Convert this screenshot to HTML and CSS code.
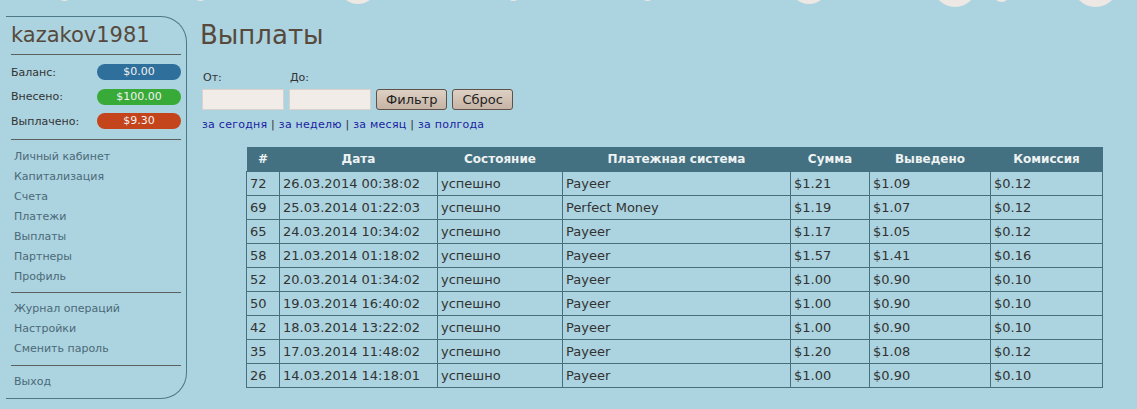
FILE: index.html
```html
<!DOCTYPE html>
<html lang="ru">
<head>
    <meta charset="UTF-8">
    <title>Выплаты</title>
    <link rel="stylesheet" href="styles.css">
</head>
<body>
    <div class="bubbles">
        <span class="bubble b1"></span>
        <span class="bubble b2"></span>
        <span class="bubble b3"></span>
        <span class="bubble b4"></span>
        <span class="bubble b5"></span>
        <span class="bubble b6"></span>
        <span class="bubble b7"></span>
        <span class="bubble b8"></span>
        <span class="bubble b9"></span>
    </div>

    <div class="page">
        <div class="sidebar">
            <h2 class="user-name">kazakov1981</h2>
            <div class="balance-list">
                <div class="balance-row">
                    <span>Баланс:</span>
                    <span class="pill pill-blue">$0.00</span>
                </div>
                <div class="balance-row">
                    <span>Внесено:</span>
                    <span class="pill pill-green">$100.00</span>
                </div>
                <div class="balance-row">
                    <span>Выплачено:</span>
                    <span class="pill pill-red">$9.30</span>
                </div>
            </div>
            <ul class="menu">
                <li><a href="#">Личный кабинет</a></li>
                <li><a href="#">Капитализация</a></li>
                <li><a href="#">Счета</a></li>
                <li><a href="#">Платежи</a></li>
                <li><a href="#">Выплаты</a></li>
                <li><a href="#">Партнеры</a></li>
                <li><a href="#">Профиль</a></li>
            </ul>
            <ul class="menu">
                <li><a href="#">Журнал операций</a></li>
                <li><a href="#">Настройки</a></li>
                <li><a href="#">Сменить пароль</a></li>
            </ul>
            <ul class="menu menu-last">
                <li><a href="#">Выход</a></li>
            </ul>
        </div>

        <div class="content">
            <h1 class="page-title">Выплаты</h1>

            <form class="filter">
                <div class="filter-labels">
                    <label for="dateFrom">От:</label>
                    <label for="dateTo">До:</label>
                </div>
                <div class="filter-inputs">
                    <input type="text" id="dateFrom">
                    <input type="text" id="dateTo">
                    <button type="button" class="btn">Фильтр</button>
                    <button type="button" class="btn">Сброс</button>
                </div>
                <div class="quick-links">
                    <a href="#">за сегодня</a> | <a href="#">за неделю</a> | <a href="#">за месяц</a> | <a href="#">за полгода</a>
                </div>
            </form>

            <table class="payouts">
                <thead>
                    <tr>
                        <th class="col-id">#</th>
                        <th class="col-date">Дата</th>
                        <th class="col-state">Состояние</th>
                        <th class="col-system">Платежная система</th>
                        <th class="col-sum">Сумма</th>
                        <th class="col-out">Выведено</th>
                        <th class="col-fee">Комиссия</th>
                    </tr>
                </thead>
                <tbody>
                    <tr><td>72</td><td>26.03.2014 00:38:02</td><td>успешно</td><td>Payeer</td><td>$1.21</td><td>$1.09</td><td>$0.12</td></tr>
                    <tr><td>69</td><td>25.03.2014 01:22:03</td><td>успешно</td><td>Perfect Money</td><td>$1.19</td><td>$1.07</td><td>$0.12</td></tr>
                    <tr><td>65</td><td>24.03.2014 10:34:02</td><td>успешно</td><td>Payeer</td><td>$1.17</td><td>$1.05</td><td>$0.12</td></tr>
                    <tr><td>58</td><td>21.03.2014 01:18:02</td><td>успешно</td><td>Payeer</td><td>$1.57</td><td>$1.41</td><td>$0.16</td></tr>
                    <tr><td>52</td><td>20.03.2014 01:34:02</td><td>успешно</td><td>Payeer</td><td>$1.00</td><td>$0.90</td><td>$0.10</td></tr>
                    <tr><td>50</td><td>19.03.2014 16:40:02</td><td>успешно</td><td>Payeer</td><td>$1.00</td><td>$0.90</td><td>$0.10</td></tr>
                    <tr><td>42</td><td>18.03.2014 13:22:02</td><td>успешно</td><td>Payeer</td><td>$1.00</td><td>$0.90</td><td>$0.10</td></tr>
                    <tr><td>35</td><td>17.03.2014 11:48:02</td><td>успешно</td><td>Payeer</td><td>$1.20</td><td>$1.08</td><td>$0.12</td></tr>
                    <tr><td>26</td><td>14.03.2014 14:18:01</td><td>успешно</td><td>Payeer</td><td>$1.00</td><td>$0.90</td><td>$0.10</td></tr>
                </tbody>
            </table>
        </div>
    </div>
</body>
</html>
```

FILE: styles.css
```css
body {
    margin: 0;
    background-color: #abd3e0;
    font-family: 'DejaVu Sans', Verdana, sans-serif;
    color: #333;
    height: 409px;
    overflow: hidden;
}

/* decorative bubbles along the top edge */
.bubbles {
    position: absolute;
    top: 0;
    left: 0;
    width: 100%;
    height: 10px;
}

.bubble {
    position: absolute;
    border-radius: 50%;
    background-color: #ede8e3;
}

.b1 { left: 338px; top: -36px; width: 40px; height: 40px; }
.b2 { left: 505px; top: -16px; width: 17px; height: 17px; }
.b3 { left: 640px; top: -15px; width: 15px; height: 16px; }
.b4 { left: 789px; top: -36px; width: 40px; height: 40px; }
.b5 { left: 932px; top: -40px; width: 46px; height: 47px; }
.b6 { left: 993px; top: -15px; width: 17px; height: 17px; }
.b7 { left: 1072px; top: -40px; width: 47px; height: 47px; }
.b8 { left: 57px; top: -14px; width: 15px; height: 15px; }
.b9 { left: 193px; top: -14px; width: 15px; height: 15px; }

.page {
    display: flex;
    align-items: flex-start;
}

/* sidebar */
.sidebar {
    width: 170px;
    margin: 16px 0 0 6px;
    padding: 0 5px 0 5px;
    border: 1px solid #4c7888;
    border-left: none;
    border-radius: 0 26px 26px 0;
}

.user-name {
    margin: 0;
    padding: 6px 0 6px 0;
    font-size: 21px;
    font-weight: normal;
    line-height: 25px;
    color: #57493c;
    border-bottom: 1px solid #5b5f5f;
}

.balance-list {
    padding: 5px 0 5px 0;
    border-bottom: 1px solid #5b5f5f;
}

.balance-row {
    display: flex;
    justify-content: space-between;
    align-items: center;
    height: 24.5px;
    font-size: 11px;
    color: #333;
}

.pill {
    width: 84px;
    height: 16px;
    line-height: 16px;
    border-radius: 8px;
    text-align: center;
    color: #f2f2f2;
    font-size: 11px;
}

.pill-blue { background-color: #2f6f9c; }
.pill-green { background-color: #38aa38; }
.pill-red { background-color: #c4441c; }

.menu {
    list-style: none;
    margin: 0;
    padding: 6px 0 6px 3px;
    border-bottom: 1px solid #5b5f5f;
}

.menu:first-of-type {
    padding-top: 7px;
    padding-bottom: 5px;
}

.menu li {
    height: 20px;
    line-height: 20px;
    font-size: 11px;
}

.menu a {
    color: #4b6a77;
    text-decoration: none;
}

.menu-last {
    border-bottom: none;
}

/* content */
.content {
    margin-left: 13px;
}

.page-title {
    margin: 19px 0 0 0;
    font-size: 26px;
    font-weight: normal;
    line-height: 32px;
    color: #57493c;
}

.filter {
    margin-top: 20px;
    margin-left: 2px;
}

.filter-labels {
    display: flex;
    font-size: 11px;
    color: #333;
    height: 18px;
}

.filter-labels label {
    width: 86px;
    padding-left: 1px;
}

.filter-inputs {
    display: flex;
    gap: 5px;
}

.filter-inputs input {
    width: 78px;
    height: 17px;
    padding: 1px;
    border: 1px solid #d9d2cc;
    background-color: #f1ece7;
}

.btn {
    height: 21px;
    padding: 0 9px;
    border: 1px solid #5e5249;
    border-radius: 3px;
    background: linear-gradient(#ddd0c4, #c6b4a4);
    font-family: 'DejaVu Sans', Verdana, sans-serif;
    font-size: 13px;
    color: #222;
    cursor: pointer;
}

.quick-links {
    margin-top: 8px;
    font-size: 11px;
    letter-spacing: 0.25px;
    color: #333;
}

.quick-links a {
    color: #1b1ea0;
    text-decoration: none;
}

.payouts {
    margin: 16px 0 0 46px;
    border-collapse: collapse;
    font-size: 13px;
}

.payouts th {
    height: 24px;
    padding: 0;
    background-color: #437181;
    color: #eef2f3;
    font-size: 12px;
    font-weight: bold;
    text-align: center;
}

.payouts td {
    height: 23px;
    padding: 0 3px;
    border: 1px solid #47707f;
    color: #333;
    white-space: nowrap;
}

.col-id { width: 33px; }
.col-date { width: 158px; }
.col-state { width: 125px; }
.col-system { width: 228px; }
.col-sum { width: 79px; }
.col-out { width: 121px; }
.col-fee { width: 112px; }
```
